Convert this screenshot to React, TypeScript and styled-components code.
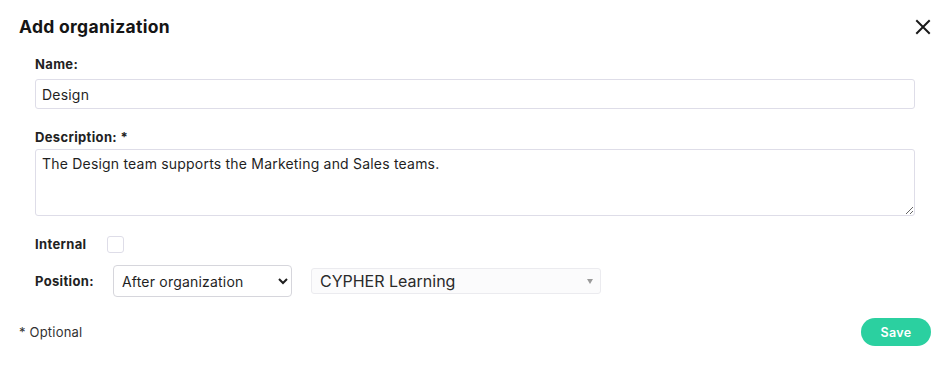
import styled, { createGlobalStyle } from "styled-components"

const GlobalStyle = createGlobalStyle`
  body {
    margin: 0;
    background: #ffffff;
    font-family: Inter, "Open Sans", sans-serif;
    color: #1f1f1f;
  }
`

const Dialog = styled.div`
  width: 950px;
  height: 366px;
  box-sizing: border-box;
  padding: 0 19px 0 19px;
  display: flex;
  flex-direction: column;
`

const Header = styled.div`
  display: flex;
  align-items: center;
  justify-content: space-between;
  height: 53px;
`

const Title = styled.h1`
  margin: 0;
  font-size: 17.5px;
  font-weight: 700;
  color: #151515;
  letter-spacing: 0.3px;
`

const CloseButton = styled.button`
  border: 0;
  background: none;
  padding: 0;
  margin-right: -2px;
  width: 20px;
  height: 20px;
  display: flex;
  align-items: center;
  justify-content: center;
  cursor: pointer;
`

const Body = styled.div`
  padding: 0 16px;
  display: flex;
  flex-direction: column;
`

const Label = styled.label`
  display: block;
  font-size: 13px;
  font-weight: 700;
  color: #222;
  line-height: 18px;
  letter-spacing: 0.35px;
`

const Field = styled.div<{ $gap: number }>`
  display: flex;
  flex-direction: column;
  gap: ${(p) => p.$gap}px;
  margin-bottom: 17px;
  padding-top: 2px;
`

const TextInput = styled.input`
  box-sizing: border-box;
  height: 30px;
  width: 100%;
  border: 1px solid #dedde8;
  border-radius: 3px;
  padding: 0 6px;
  font-family: inherit;
  font-size: 14px;
  letter-spacing: 0.2px;
  color: #1f1f1f;
  outline: none;
`

const TextArea = styled.textarea`
  box-sizing: border-box;
  height: 67px;
  width: 100%;
  border: 1px solid #dedde8;
  border-radius: 3px;
  padding: 5px 6px;
  font-family: inherit;
  font-size: 14px;
  letter-spacing: 0.2px;
  line-height: 18px;
  color: #1f1f1f;
  outline: none;
  resize: vertical;
  display: block;
`

const InlineRow = styled.div<{ $gap: number; $above?: number; $below?: number }>`
  display: flex;
  align-items: center;
  gap: ${(p) => p.$gap}px;
  margin-top: ${(p) => p.$above ?? 0}px;
  margin-bottom: ${(p) => p.$below ?? 0}px;
`

const Checkbox = styled.span`
  width: 17px;
  height: 17px;
  border: 1px solid #dedde8;
  border-radius: 3px;
  box-sizing: border-box;
  display: inline-block;
`

const NativeSelect = styled.select`
  box-sizing: border-box;
  width: 179px;
  height: 32px;
  border: 1px solid #d6d6dc;
  border-radius: 4px;
  background: #fff;
  padding: 0 4px;
  font-family: inherit;
  font-size: 14px;
  letter-spacing: 0.2px;
  color: #1f1f1f;
`

const ComboBox = styled.div`
  box-sizing: border-box;
  width: 290px;
  height: 26px;
  border: 1px solid #ebebef;
  border-radius: 3px;
  background: #fbfbfc;
  display: flex;
  align-items: center;
  justify-content: space-between;
  padding: 0 7px 0 8px;
  font-size: 16px;
  color: #2a2a2a;
`

const Caret = styled.span`
  width: 0;
  height: 0;
  border-left: 3px solid transparent;
  border-right: 3px solid transparent;
  border-top: 5px solid #9a9a9a;
`

const Footer = styled.div`
  margin-top: auto;
  margin-bottom: 20px;
  display: flex;
  align-items: center;
  justify-content: space-between;
`

const Note = styled.span`
  font-size: 13px;
  letter-spacing: 0.2px;
  color: #333;
`

const SaveButton = styled.button`
  border: 0;
  background: #2bd0a0;
  color: #fff;
  font-family: inherit;
  font-size: 12.5px;
  font-weight: 600;
  letter-spacing: 0.3px;
  height: 28px;
  width: 70px;
  border-radius: 14px;
  cursor: pointer;
`

export default function App() {
  return (
    <>
      <GlobalStyle />
      <Dialog>
        <Header>
          <Title>Add organization</Title>
          <CloseButton aria-label="Close">
            <svg width="16" height="16" viewBox="0 0 16 16">
              <path d="M2 2L14 14M14 2L2 14" stroke="#1a1a1a" strokeWidth="2" strokeLinecap="square" />
            </svg>
          </CloseButton>
        </Header>
        <Body>
          <Field $gap={6}>
            <Label>Name:</Label>
            <TextInput defaultValue="Design" />
          </Field>
          <Field $gap={3}>
            <Label>Description: *</Label>
            <TextArea defaultValue="The Design team supports the Marketing and Sales teams." />
          </Field>
          <InlineRow $gap={21} $above={2} $below={12}>
            <Label>Internal</Label>
            <Checkbox />
          </InlineRow>
          <InlineRow $gap={19}>
            <Label>Position:</Label>
            <NativeSelect defaultValue="after">
              <option value="after">After organization</option>
              <option value="before">Before organization</option>
            </NativeSelect>
            <ComboBox>
              CYPHER Learning
              <Caret />
            </ComboBox>
          </InlineRow>
        </Body>
        <Footer>
          <Note>* Optional</Note>
          <SaveButton>Save</SaveButton>
        </Footer>
      </Dialog>
    </>
  )
}
